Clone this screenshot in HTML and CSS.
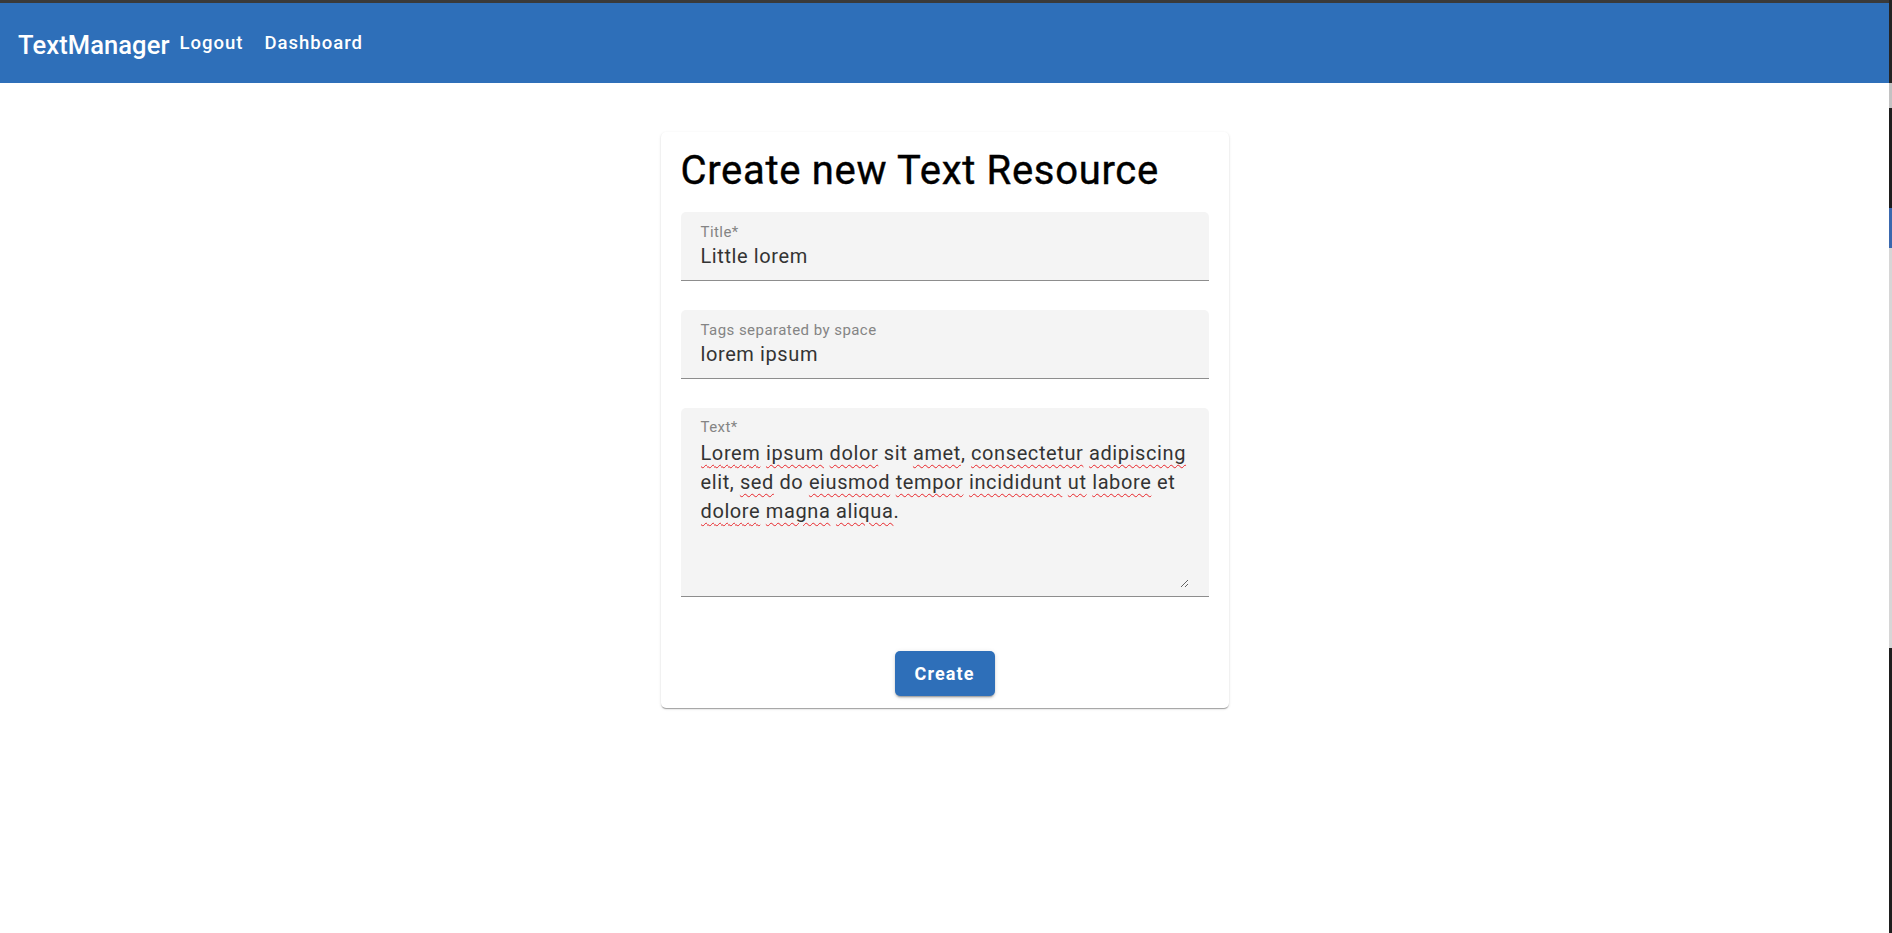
FILE: index.html
```html
<!DOCTYPE html>
<html lang="en">
<head>
<meta charset="utf-8">
<title>TextManager</title>
<link rel="stylesheet" href="styles.css">
</head>
<body>
<div class="screen">
  <div class="app">
    <div class="topline"></div>
    <header class="appbar">
      <span class="brand">TextManager</span>
      <nav class="nav">
        <a class="nav-btn" href="#">Logout</a>
        <a class="nav-btn" href="#">Dashboard</a>
      </nav>
    </header>
    <main class="content">
      <form class="card">
        <h1 class="card-title">Create new Text Resource</h1>
        <div class="field">
          <label class="field-label">Title*</label>
          <div class="field-value">Little lorem</div>
        </div>
        <div class="field">
          <label class="field-label">Tags separated by space</label>
          <div class="field-value">lorem ipsum</div>
        </div>
        <div class="field field-multi">
          <label class="field-label">Text*</label>
          <div class="field-area" role="textbox"><span class="sp">Lorem</span> <span class="sp">ipsum</span> <span class="sp">dolor</span> sit <span class="sp">amet</span>, <span class="sp">consectetur</span> <span class="sp">adipiscing</span> elit, <span class="sp">sed</span> do <span class="sp">eiusmod</span> <span class="sp">tempor</span> <span class="sp">incididunt</span> <span class="sp">ut</span> <span class="sp">labore</span> et <span class="sp">dolore</span> <span class="sp">magna</span> <span class="sp">aliqua</span>.</div>
        </div>
        <div class="actions">
          <button type="button" class="btn-primary">Create</button>
        </div>
      </form>
    </main>
  </div>
  <div class="edge">
    <div class="seg seg-dark1"></div>
    <div class="seg seg-thumb"></div>
    <div class="seg seg-dark2"></div>
    <div class="seg seg-blue"></div>
    <div class="seg seg-light"></div>
    <div class="seg seg-dark3"></div>
  </div>
</div>
</body>
</html>
```

FILE: styles.css
```css
* { box-sizing: border-box; }

html, body {
  margin: 0;
  padding: 0;
  background: #ffffff;
}

body {
  font-family: Roboto, "Liberation Sans", Arial, sans-serif;
  overflow: hidden;
}

.screen {
  display: flex;
  width: 1892px;
  height: 933px;
}

.app {
  flex: 1;
  display: flex;
  flex-direction: column;
  min-width: 0;
}

.topline {
  height: 3px;
  background: #3a3a3a;
}

.appbar {
  height: 80px;
  background: #2e6fb9;
  display: flex;
  align-items: center;
  padding-left: 18px;
  color: #ffffff;
}

.brand {
  font-size: 25.5px;
  font-weight: 500;
  letter-spacing: 0.1px;
  line-height: 1;
  margin-top: 5px;
}

.nav {
  display: flex;
  margin-left: 0;
  margin-top: 0;
}

.nav-btn {
  color: #ffffff;
  text-decoration: none;
  font-size: 18.5px;
  font-weight: 500;
  letter-spacing: 1px;
  padding: 8px 10px 8px 10px;
  line-height: 1.2;
}

.nav-btn + .nav-btn {
  margin-left: 1px;
}

.content {
  flex: 1;
  display: flex;
  justify-content: center;
  align-items: flex-start;
  padding-top: 49px;
}

.card {
  width: 568px;
  background: #ffffff;
  border-radius: 5px;
  box-shadow: 0 2px 1px -1px rgba(0,0,0,0.2), 0 1px 1px 0 rgba(0,0,0,0.14), 0 1px 3px 0 rgba(0,0,0,0.12);
  padding: 15px 20px 12px 20px;
  display: flex;
  flex-direction: column;
}

.card-title {
  margin: 0 0 17px 0;
  font-size: 40px;
  font-weight: 400;
  line-height: 48px;
  color: #000000;
  letter-spacing: 0.7px;
  -webkit-text-stroke: 0.4px #000000;
}

.field {
  background: #f4f4f4;
  border-radius: 5px 5px 0 0;
  border-bottom: 1px solid #8d8d8d;
  padding: 11px 20px 12px 20px;
  display: flex;
  flex-direction: column;
  margin-bottom: 29px;
}

.field-label {
  font-size: 15px;
  line-height: 18px;
  color: #848484;
  letter-spacing: 0.45px;
}

.field-value {
  margin-top: 3px;
  font-size: 20px;
  line-height: 24px;
  color: #333333;
  letter-spacing: 0.6px;
}

.field-multi {
  padding-top: 10px;
  padding-bottom: 8px;
  margin-bottom: 54px;
}

.field-area {
  margin-top: 3px;
  height: 149px;
  padding-bottom: 5px;
  font-size: 20px;
  line-height: 28.75px;
  color: #333333;
  letter-spacing: 0.6px;
  overflow: auto;
  resize: vertical;
}

.sp {
  text-decoration-line: underline;
  text-decoration-style: wavy;
  text-decoration-color: #e8252a;
  text-decoration-thickness: 1px;
  text-underline-offset: 4px;
}

.actions {
  display: flex;
  justify-content: center;
}

.btn-primary {
  width: 100px;
  height: 45px;
  border: none;
  border-radius: 5px;
  background: #2e6fb9;
  color: #ffffff;
  font-family: Roboto, "Liberation Sans", Arial, sans-serif;
  font-size: 18px;
  font-weight: 700;
  letter-spacing: 1.1px;
  box-shadow: 0 3px 1px -2px rgba(0,0,0,0.2), 0 2px 2px 0 rgba(0,0,0,0.14), 0 1px 5px 0 rgba(0,0,0,0.12);
  cursor: pointer;
}

.edge {
  width: 3px;
  display: flex;
  flex-direction: column;
}

.seg { width: 100%; }
.seg-dark1 { height: 83px; background: #232323; }
.seg-thumb { height: 25px; background: #c2c2c2; }
.seg-dark2 { height: 100px; background: #1e1e1e; }
.seg-blue { height: 40px; background: #3a68ae; }
.seg-light { height: 400px; background: #d6d6d6; }
.seg-dark3 { flex: 1; background: #1e1e1e; }
```
